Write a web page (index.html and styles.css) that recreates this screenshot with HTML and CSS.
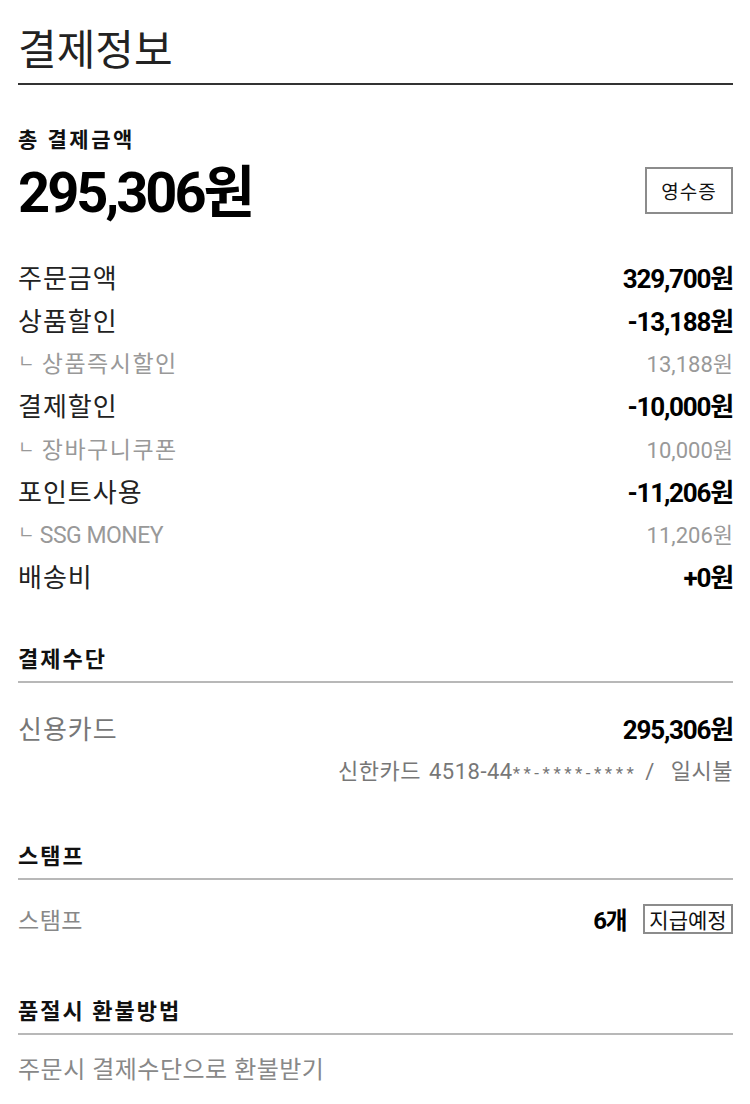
FILE: index.html
```html
<!DOCTYPE html>
<html>
<head>
    <title>결제정보</title>
    <link rel="stylesheet" href="styles.css">
</head>
<body>
    <div class="container">
        <h2 class="page-title">결제정보</h2>

        <div class="total">
            <div class="total-label">총 결제금액</div>
            <div class="total-row">
                <div class="total-price">295,306원</div>
                <button class="btn-box btn-receipt">영수증</button>
            </div>
        </div>

        <ul class="price-list">
            <li class="row"><span class="label">주문금액</span><span class="value">329,700원</span></li>
            <li class="row"><span class="label">상품할인</span><span class="value">-13,188원</span></li>
            <li class="row sub"><span class="label"><span class="mark">ㄴ</span> 상품즉시할인</span><span class="value">13,188원</span></li>
            <li class="row"><span class="label">결제할인</span><span class="value">-10,000원</span></li>
            <li class="row sub"><span class="label"><span class="mark">ㄴ</span> 장바구니쿠폰</span><span class="value">10,000원</span></li>
            <li class="row"><span class="label">포인트사용</span><span class="value">-11,206원</span></li>
            <li class="row sub"><span class="label en"><span class="mark">ㄴ</span> SSG MONEY</span><span class="value">11,206원</span></li>
            <li class="row"><span class="label">배송비</span><span class="value">+0원</span></li>
        </ul>

        <div class="section section-pay">
            <h3 class="section-title">결제수단</h3>
            <div class="pay-row">
                <span class="pay-label">신용카드</span>
                <span class="value">295,306원</span>
            </div>
            <div class="pay-detail">신한카드 4518-44<span class="mask">**-****-****</span> /&nbsp; 일시불</div>
        </div>

        <div class="section section-stamp">
            <h3 class="section-title">스탬프</h3>
            <div class="stamp-row">
                <span class="stamp-label">스탬프</span>
                <span class="stamp-value">
                    <span class="stamp-count">6개</span>
                    <span class="btn-box btn-stamp">지급예정</span>
                </span>
            </div>
        </div>

        <div class="section section-refund">
            <h3 class="section-title">품절시 환불방법</h3>
            <p class="refund">주문시 결제수단으로 환불받기</p>
        </div>
    </div>
</body>
</html>
```

FILE: styles.css
```css
body {
  margin: 0;
  padding: 0;
  background-color: #ffffff;
  font-family: Roboto, "Noto Sans CJK KR", sans-serif;
  color: #222222;
}

.container {
  padding: 0 17px 0 18px;
}

.page-title {
  margin: 0;
  padding: 26px 0 7px;
  font-size: 42px;
  font-weight: 400;
  line-height: 50px;
  color: #222222;
  border-bottom: 2px solid #333333;
}

.total {
  padding-top: 42px;
}

.total-label {
  font-size: 21px;
  font-weight: 700;
  line-height: 26px;
  letter-spacing: 2.5px;
  color: #111111;
}

.total-row {
  display: flex;
  justify-content: space-between;
  align-items: center;
  margin-top: 10px;
}

.total-price {
  font-size: 56px;
  font-weight: 700;
  line-height: 60px;
  letter-spacing: -3px;
  color: #000000;
}

.btn-box {
  font-family: "Noto Sans CJK KR", sans-serif;
  background: #ffffff;
  border: 2px solid #8c8c8c;
  color: #111111;
  padding: 0;
}

.btn-receipt {
  width: 88px;
  height: 47px;
  margin-bottom: 6px;
  font-size: 19px;
  letter-spacing: 1px;
}

.price-list {
  list-style: none;
  margin: 0;
  padding: 32px 0 0;
}

.row {
  display: flex;
  justify-content: space-between;
  align-items: center;
  height: 42.8px;
}

.label {
  font-size: 26px;
  letter-spacing: 1px;
  color: #222222;
}

.value {
  font-size: 26px;
  font-weight: 700;
  letter-spacing: -1.2px;
  color: #000000;
}

.row.sub .label {
  font-size: 23px;
  letter-spacing: 1.5px;
  color: #999999;
}

.row.sub .label.en {
  letter-spacing: -0.5px;
}

.row.sub .value {
  font-size: 22px;
  font-weight: 400;
  letter-spacing: 0;
  color: #999999;
}

.mark {
  font-size: 18px;
  letter-spacing: 0;
  vertical-align: 4px;
}

.section-title {
  margin: 0;
  padding-bottom: 7px;
  font-size: 22px;
  font-weight: 700;
  line-height: 28px;
  letter-spacing: 2px;
  color: #111111;
  border-bottom: 2px solid #b8b8b8;
}

.section-pay {
  padding-top: 49px;
}

.section-stamp {
  padding-top: 55px;
}

.section-refund {
  padding-top: 62px;
}

.pay-row {
  display: flex;
  justify-content: space-between;
  align-items: center;
  height: 34px;
  margin-top: 27px;
}

.pay-label {
  font-size: 26px;
  letter-spacing: 1px;
  color: #777777;
}

.pay-detail {
  margin-top: 13px;
  text-align: right;
  font-size: 22px;
  line-height: 30px;
  letter-spacing: 0.5px;
  word-spacing: 2px;
  color: #777777;
}

.mask {
  font-size: 17px;
  letter-spacing: 3.5px;
}

.stamp-row {
  display: flex;
  justify-content: space-between;
  align-items: center;
  margin-top: 21px;
}

.stamp-label {
  font-size: 23px;
  letter-spacing: 0.5px;
  color: #888888;
}

.stamp-value {
  display: flex;
  align-items: center;
  gap: 17px;
}

.stamp-count {
  font-size: 24px;
  font-weight: 700;
  letter-spacing: -1.5px;
  color: #000000;
}

.btn-stamp {
  display: inline-block;
  width: 90px;
  height: 30px;
  line-height: 26px;
  font-size: 21px;
  text-align: center;
  box-sizing: border-box;
}

.refund {
  margin: 19px 0 0;
  font-size: 24px;
  line-height: 32px;
  letter-spacing: 0.5px;
  color: #888888;
}
```
